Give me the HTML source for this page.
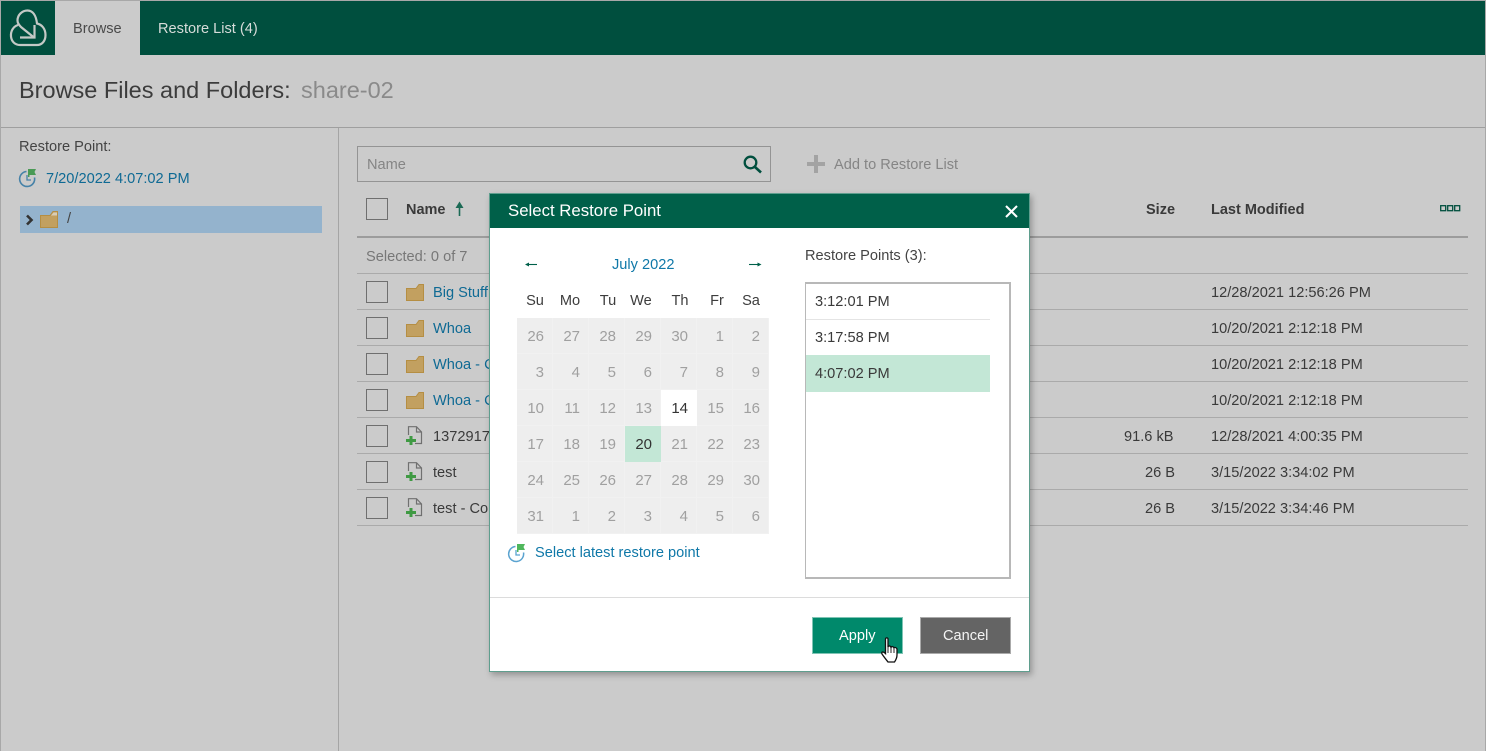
<!DOCTYPE html>
<html><head><meta charset="utf-8"><style>
*{box-sizing:border-box}
html,body{margin:0;padding:0}
body{width:1486px;height:751px;overflow:hidden;position:relative;background:#cbcbcb;font-family:"Liberation Sans",sans-serif;font-size:14.6px;color:#3a3a3a}
.a{position:absolute;white-space:nowrap}
.t{position:absolute;white-space:nowrap;line-height:18px;margin-top:1px}
.l{color:#0f6a94}
.cb{position:absolute;left:366px;width:22px;height:22px;border:1px solid #6f6f6f}
.hr{position:absolute;left:357px;width:1111px;height:1px;background:#aaa}
svg{position:absolute;overflow:visible}
.cal{position:absolute;left:517px;top:318px;width:252px;height:216px;display:grid;grid-template-columns:repeat(7,36px);grid-template-rows:repeat(6,36px);background:#eee}
.cal div{text-align:right;padding-right:8px;line-height:38px;overflow:hidden;color:#a0a0a0;font-size:15px;border-right:1px solid #f1f1f1;border-bottom:1px solid #f1f1f1}
.cal .w{background:#fff;color:#333;border-color:#fff}
.cal .s{background:#c3e7d6;color:#333;border-color:#c3e7d6}
.dow{position:absolute;top:292px;font-size:14.6px;line-height:18px;color:#3d3d3d;width:36px;text-align:center}
</style></head><body>
<div class="a" style="left:0;top:0;width:1486px;height:751px;border:1px solid #a8a8a8;border-bottom:0;z-index:9;pointer-events:none"></div>
<div class="a" style="left:0;top:0;width:1486px;height:55px;background:#004f3e"></div>
<svg style="left:0;top:0" width="55" height="55" viewBox="0 0 55 55" fill="none" stroke="#c4c9c6" stroke-width="2.200"><path d="M18 25C13 26.500 10.500 31.500 11 36.500C11.500 41.500 15 45 20 45H37C42 45 45.500 41 45.500 35C45.500 29 42 24.500 37 23.500C36 15 32.500 10.500 27.500 10.500C22 10.500 17.500 15 17.500 20.500C17.500 23 19 25 21 27L34 37.500"/><path d="M20 37.500H34.500V25"/></svg>
<div class="a" style="left:55px;top:1px;width:85px;height:54px;background:#cbcbcb"></div>
<div class="t" style="left:73px;top:19px;color:#4a4a4a">Browse</div>
<div class="t" style="left:158px;top:19px;color:#d6dcd9">Restore List (4)</div>
<div class="t" style="left:19px;top:74.500px;font-size:23.5px;line-height:28px;color:#3c3c3c">Browse Files and Folders:</div>
<div class="t" style="left:301px;top:74.500px;font-size:23.5px;line-height:28px;color:#8a8a8a">share-02</div>
<div class="a" style="left:0;top:127px;width:1486px;height:1px;background:#9f9f9f"></div>
<div class="a" style="left:338px;top:128px;width:1px;height:623px;background:#a5a5a5"></div>
<div class="t" style="left:19px;top:137px;color:#444">Restore Point:</div>
<svg style="left:18px;top:168px" width="20" height="20" fill="none"><path d="M8.500 3.500A7.500 7.500 0 1 0 16.500 9.500" stroke="#4682a8" stroke-width="1.600"/><path d="M9 7V12H13" stroke="#4682a8" stroke-width="1.300"/><path d="M10 1H18L16.500 4 18 7H11.500V9H10Z" fill="#4a9a55"/></svg>
<div class="t l" style="left:46px;top:169px">7/20/2022 4:07:02 PM</div>
<div class="a" style="left:20px;top:206px;width:302px;height:27px;background:#94b3cd"></div>
<svg style="left:25px;top:214px" width="10" height="12" fill="none"><path d="M2 1.500L6.500 6L2 10.500" stroke="#333" stroke-width="2.600"/></svg>
<svg style="left:40px;top:211px" width="19" height="17"><path d="M.5 4.500H10L13 .5H17.500V16.500H.5Z" fill="#c2a060" stroke="#b58e43"/><path d="M11 4.500L13.500 1.500H17V4.500Z" fill="#d8cdb6"/></svg>
<div class="t" style="left:67px;top:209px;color:#444">/</div>

<div class="a" style="left:357px;top:146px;width:414px;height:36px;border:1px solid #949494"></div>
<div class="t" style="left:367px;top:155px;color:#858585">Name</div>
<svg style="left:743px;top:155px" width="20" height="20" fill="none" stroke="#004f3e" stroke-width="2.300"><circle cx="7.500" cy="7.500" r="5.800"/><path d="M12 12L18 17.500" stroke-width="2.600"/></svg>
<svg style="left:807px;top:155px" width="18" height="18"><path d="M7 0h4v7h7v4h-7v7H7v-7H0V7h7z" fill="#a3a3a3"/></svg>
<div class="t" style="left:834px;top:155px;color:#858585">Add to Restore List</div>

<div class="cb" style="top:198px"></div>
<div class="t" style="left:406px;top:200px;font-weight:bold;font-size:14.5px;color:#3a3a3a">Name</div>
<svg style="left:454.500px;top:201px" width="10" height="15" fill="none"><path d="M4.500 15V3" stroke="#1c6a55" stroke-width="1.600"/><path d="M.5 7L4.500 .5L8.500 7Z" fill="#1c6a55"/></svg>
<div class="t" style="left:1146px;top:200px;font-weight:bold;font-size:14.5px">Size</div>
<div class="t" style="left:1211px;top:200px;font-weight:bold;font-size:14.5px">Last Modified</div>
<svg style="left:1440px;top:205px" width="21" height="7" fill="none" stroke="#004f3e" stroke-width="1.300"><rect x=".7" y=".7" width="5" height="5"/><rect x="7.700" y=".7" width="5" height="5"/><rect x="14.700" y=".7" width="5" height="5"/></svg>
<div class="a" style="left:357px;top:236px;width:1111px;height:2px;background:#9c9c9c"></div>
<div class="t" style="left:366px;top:247px;color:#777">Selected: 0 of 7</div>
<div class="hr" style="top:273px"></div>
<div class="hr" style="top:309px"></div>
<div class="hr" style="top:345px"></div>
<div class="hr" style="top:381px"></div>
<div class="hr" style="top:417px"></div>
<div class="hr" style="top:453px"></div>
<div class="hr" style="top:489px"></div>
<div class="hr" style="top:525px"></div>

<div class="cb" style="top:281px"></div><div class="cb" style="top:317px"></div><div class="cb" style="top:353px"></div><div class="cb" style="top:389px"></div><div class="cb" style="top:425px"></div><div class="cb" style="top:461px"></div><div class="cb" style="top:497px"></div>

<svg style="left:406px;top:284px" width="19" height="17"><path d="M.5 4.500H10L13 .5H17.500V16.500H.5Z" fill="#c2a060" stroke="#b58e43"/></svg>
<svg style="left:406px;top:320px" width="19" height="17"><path d="M.5 4.500H10L13 .5H17.500V16.500H.5Z" fill="#c2a060" stroke="#b58e43"/></svg>
<svg style="left:406px;top:356px" width="19" height="17"><path d="M.5 4.500H10L13 .5H17.500V16.500H.5Z" fill="#c2a060" stroke="#b58e43"/></svg>
<svg style="left:406px;top:392px" width="19" height="17"><path d="M.5 4.500H10L13 .5H17.500V16.500H.5Z" fill="#c2a060" stroke="#b58e43"/></svg>
<svg style="left:406px;top:426px" width="18" height="20" fill="none"><path d="M2.500 9V.7H10.500L15.500 6V17.500H9M10.500 .7V6H15.500" stroke="#707070" stroke-width="1.200"/><path d="M3.500 10h3v3h3.500v3H6.500v3h-3v-3H0v-3h3.500z" fill="#3f9a43"/></svg>
<svg style="left:406px;top:462px" width="18" height="20" fill="none"><path d="M2.500 9V.7H10.500L15.500 6V17.500H9M10.500 .7V6H15.500" stroke="#707070" stroke-width="1.200"/><path d="M3.500 10h3v3h3.500v3H6.500v3h-3v-3H0v-3h3.500z" fill="#3f9a43"/></svg>
<svg style="left:406px;top:498px" width="18" height="20" fill="none"><path d="M2.500 9V.7H10.500L15.500 6V17.500H9M10.500 .7V6H15.500" stroke="#707070" stroke-width="1.200"/><path d="M3.500 10h3v3h3.500v3H6.500v3h-3v-3H0v-3h3.500z" fill="#3f9a43"/></svg>

<div class="t l" style="left:433px;top:283px">Big Stuff</div>
<div class="t l" style="left:433px;top:319px">Whoa</div>
<div class="t l" style="left:433px;top:355px">Whoa - Copy</div>
<div class="t l" style="left:433px;top:391px">Whoa - Copy</div>
<div class="t" style="left:433px;top:427px">1372917</div>
<div class="t" style="left:433px;top:463px">test</div>
<div class="t" style="left:433px;top:499px">test - Copy</div>

<div class="t" style="left:1124px;top:427px">91.6 kB</div>
<div class="t" style="left:1145px;top:463px">26 B</div>
<div class="t" style="left:1145px;top:499px">26 B</div>
<div class="t" style="left:1211px;top:283px">12/28/2021 12:56:26 PM</div>
<div class="t" style="left:1211px;top:319px">10/20/2021 2:12:18 PM</div>
<div class="t" style="left:1211px;top:355px">10/20/2021 2:12:18 PM</div>
<div class="t" style="left:1211px;top:391px">10/20/2021 2:12:18 PM</div>
<div class="t" style="left:1211px;top:427px">12/28/2021 4:00:35 PM</div>
<div class="t" style="left:1211px;top:463px">3/15/2022 3:34:02 PM</div>
<div class="t" style="left:1211px;top:499px">3/15/2022 3:34:46 PM</div>

<!-- modal -->
<div class="a" style="left:489px;top:193px;width:541px;height:479px;background:#fff;border:1px solid #5f9e8e;box-shadow:2px 3px 6px rgba(0,0,0,.28)"></div>
<div class="a" style="left:490px;top:194px;width:539px;height:34px;background:#006049"></div>
<div class="t" style="left:508px;top:200px;color:#fff;font-size:16.800px;line-height:20px">Select Restore Point</div>
<svg style="left:1005px;top:205px" width="13" height="13" fill="none" stroke="#fff" stroke-width="2.100"><path d="M1 1L12 12M12 1L1 12"/></svg>

<svg style="left:524px;top:260px" width="14" height="9"><path d="M13 4.500H3" stroke="#00604a" stroke-width="1.100"/><path d="M1 4.500L5 2.500V6.500Z" fill="#00604a"/></svg>
<div class="t" style="left:612px;top:255px;color:#0f78a8">July 2022</div>
<svg style="left:748px;top:260px" width="14" height="9"><path d="M1 4.500H11" stroke="#00604a" stroke-width="1.100"/><path d="M13.500 4.500L9.500 2.500V6.500Z" fill="#00604a"/></svg>
<div class="dow" style="left:517px">Su</div><div class="dow" style="left:552px">Mo</div><div class="dow" style="left:590px">Tu</div><div class="dow" style="left:623px">We</div><div class="dow" style="left:662px">Th</div><div class="dow" style="left:699px">Fr</div><div class="dow" style="left:733px">Sa</div>
<div class="cal">
<div>26</div><div>27</div><div>28</div><div>29</div><div>30</div><div>1</div><div>2</div>
<div>3</div><div>4</div><div>5</div><div>6</div><div>7</div><div>8</div><div>9</div>
<div>10</div><div>11</div><div>12</div><div>13</div><div class="w">14</div><div>15</div><div>16</div>
<div>17</div><div>18</div><div>19</div><div class="s">20</div><div>21</div><div>22</div><div>23</div>
<div>24</div><div>25</div><div>26</div><div>27</div><div>28</div><div>29</div><div>30</div>
<div>31</div><div>1</div><div>2</div><div>3</div><div>4</div><div>5</div><div>6</div>
</div>
<svg style="left:507px;top:543px" width="20" height="20" fill="none"><path d="M8.500 3.500A7.500 7.500 0 1 0 16.500 9.500" stroke="#5ba3d0" stroke-width="1.500"/><path d="M9 7V12H13" stroke="#5ba3d0" stroke-width="1.300"/><path d="M10 1H18L16.500 4 18 7H11.500V9H10Z" fill="#4fb75c"/></svg>
<div class="t" style="left:535px;top:543px;color:#0f78a8">Select latest restore point</div>

<div class="t" style="left:805px;top:246px;color:#444">Restore Points (3):</div>
<div class="a" style="left:805px;top:282px;width:206px;height:297px;border:1px solid #b8b8b8;border-width:2px 2px 2px 1px"></div>
<div class="a" style="left:806px;top:319px;width:184px;height:1px;background:#e4e4e4"></div>
<div class="a" style="left:806px;top:355px;width:184px;height:37px;background:#c3e7d6"></div>
<div class="t" style="left:815px;top:292px">3:12:01 PM</div>
<div class="t" style="left:815px;top:328px">3:17:58 PM</div>
<div class="t" style="left:815px;top:364px">4:07:02 PM</div>

<div class="a" style="left:490px;top:597px;width:539px;height:1px;background:#dcdcdc"></div>
<div class="a" style="left:812px;top:617px;width:91px;height:37px;background:#00896b;border:1px solid #7fc4b4"></div>
<div class="t" style="left:839px;top:626px;color:#fff">Apply</div>
<div class="a" style="left:920px;top:617px;width:91px;height:37px;background:#646464;border:1px solid #aaa"></div>
<div class="t" style="left:943px;top:626px;color:#f4f4f4">Cancel</div>
<svg style="left:880px;top:637px" width="20" height="26"><path d="M5.500 2C5.500 .5 8 .5 8 2V10C8.500 8.500 10.500 8.500 11 10.500C11.500 9 13.500 9.500 14 11C14.500 10 16.500 10.500 17 12V18C17 21 15.500 23.500 14.500 25H8C6.500 23 4 20 2 17C1 15 3 14 5.500 16.500Z" fill="#fff" stroke="#111" stroke-width="1.300"/><path d="M8 10V16M11 11V16M14 12V16" stroke="#111" stroke-width=".9"/></svg>
</body></html>
